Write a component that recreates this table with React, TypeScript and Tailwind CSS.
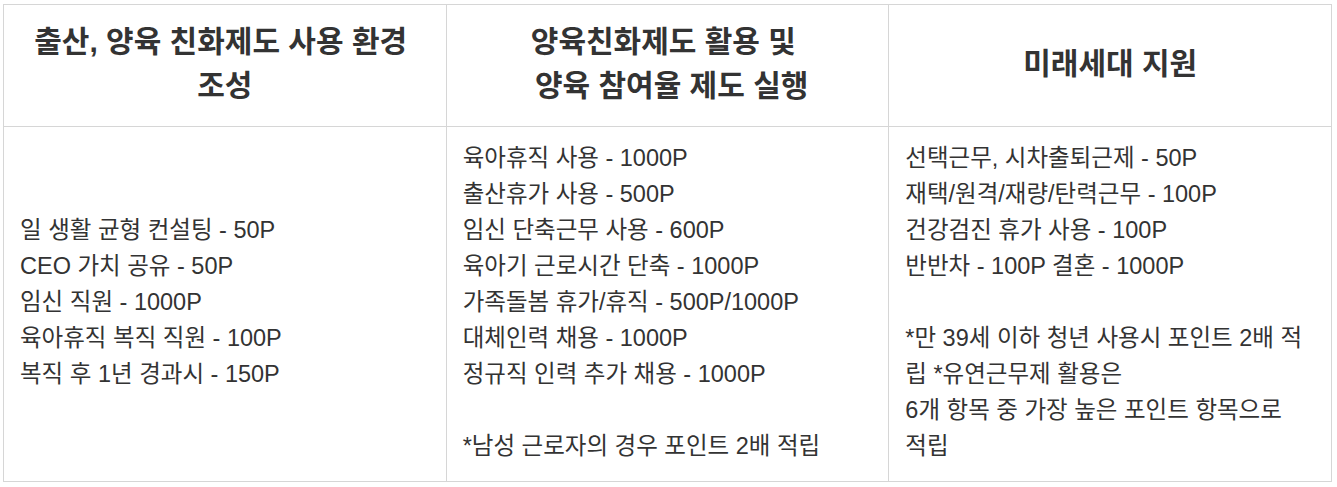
const headers = [
  ["출산, 양육 친화제도 사용 환경\u00a0", "조성"],
  ["양육친화제도 활용 및\u00a0", "\u00a0양육 참여율 제도 실행"],
  ["미래세대 지원"],
];

const col1 = [
  "일 생활 균형 컨설팅 - 50P",
  "CEO 가치 공유 - 50P",
  "임신 직원 - 1000P",
  "육아휴직 복직 직원 - 100P",
  "복직 후 1년 경과시 - 150P",
];

const col2 = [
  "육아휴직 사용 - 1000P",
  "출산휴가 사용 - 500P",
  "임신 단축근무 사용 - 600P",
  "육아기 근로시간 단축 - 1000P",
  "가족돌봄 휴가/휴직 - 500P/1000P",
  "대체인력 채용 - 1000P",
  "정규직 인력 추가 채용 - 1000P",
  "",
  "*남성 근로자의 경우 포인트 2배 적립",
];

const col3 = [
  "선택근무, 시차출퇴근제 - 50P",
  "재택/원격/재량/탄력근무 - 100P",
  "건강검진 휴가 사용 - 100P",
  "반반차 - 100P 결혼 - 1000P",
  "",
  "*만 39세 이하 청년 사용시 포인트 2배 적립 *유연근무제 활용은",
  "6개 항목 중 가장 높은 포인트 항목으로 적립",
];

function Lines({ items }: { items: string[] }) {
  return (
    <>
      {items.map((t, i) => (
        <div key={i} className="min-h-[36px]">
          {t}
        </div>
      ))}
    </>
  );
}

export default function App() {
  return (
    <div className="min-h-[487px] bg-white pl-[3px] pt-[4px]">
      <table className="w-[1329px] table-fixed border-collapse font-['Liberation_Sans','Noto_Sans_CJK_KR',sans-serif] text-[#333]">
        <thead>
          <tr>
            {headers.map((lines, i) => (
              <th
                key={i}
                className="border border-[#d6d6d6] px-4 pb-[18px] pt-[15px] text-center align-middle text-[30px] font-bold leading-[44px]"
              >
                {lines.map((l, j) => (
                  <div key={j}>{l}</div>
                ))}
              </th>
            ))}
          </tr>
        </thead>
        <tbody>
          <tr>
            {[col1, col2, col3].map((items, i) => (
              <td
                key={i}
                className="border border-[#d6d6d6] pb-[17px] pl-4 pr-6 pt-[13px] text-left align-middle text-[23.5px] leading-[36px]"
              >
                <Lines items={items} />
              </td>
            ))}
          </tr>
        </tbody>
      </table>
    </div>
  );
}
